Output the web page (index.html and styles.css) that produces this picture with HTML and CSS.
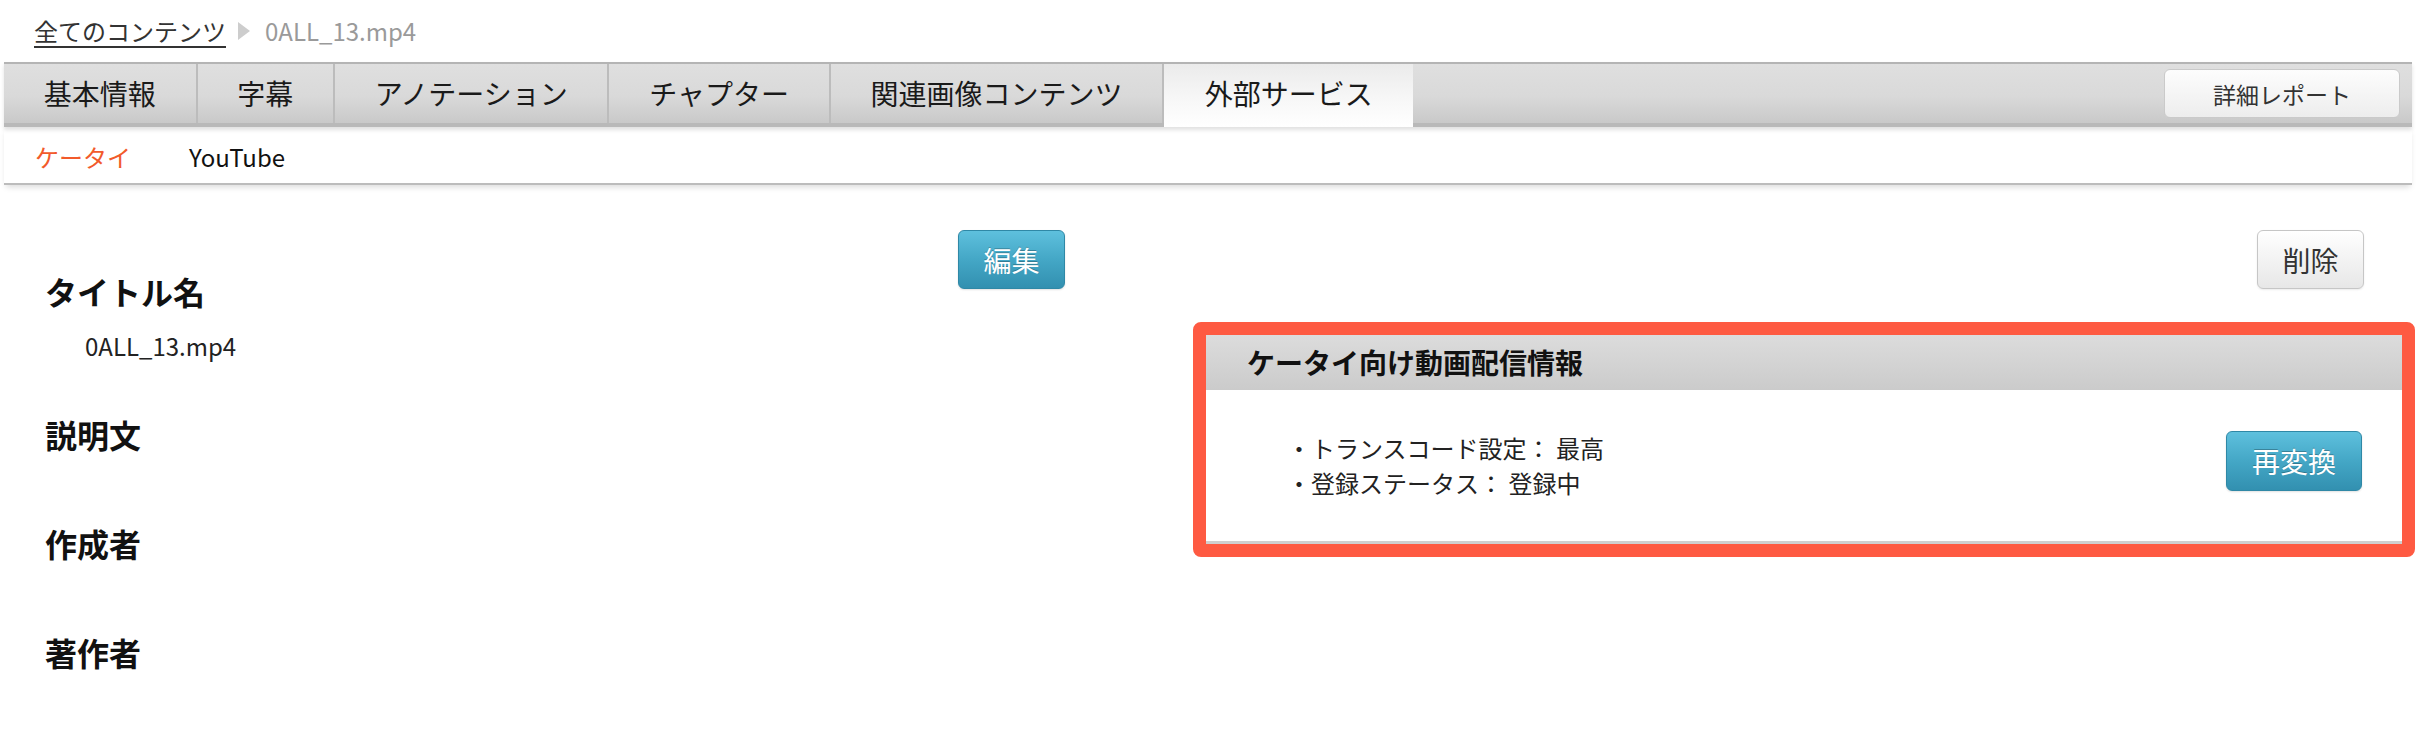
FILE: index.html
```html
<!DOCTYPE html>
<html lang="ja">
<head>
  <meta charset="UTF-8" />
  <meta name="viewport" content="width=device-width, initial-scale=1.0"/>
  <title>0ALL_13.mp4 - 外部サービス</title>
  <link rel="stylesheet" href="styles.css">
</head>

<body>
  <div class="page">
    <!-- パンくず -->
    <div class="breadcrumb">
      <a href="#">全てのコンテンツ</a>
      <span class="crumb-arrow"></span>
      <span class="crumb-current">0ALL_13.mp4</span>
    </div>

    <!-- タブ -->
    <div class="tabbar">
      <ul class="tabs">
        <li>基本情報</li>
        <li>字幕</li>
        <li>アノテーション</li>
        <li>チャプター</li>
        <li>関連画像コンテンツ</li>
        <li class="active">外部サービス</li>
      </ul>
      <button class="btn-report">詳細レポート</button>
    </div>

    <div class="subnav">
      <a href="#" class="active">ケータイ</a>
      <a href="#">YouTube</a>
    </div>

    <!-- 内容 -->
    <div class="detail">
      <div class="meta">
        <dl>
          <dt>タイトル名</dt>
          <dd>0ALL_13.mp4</dd>
          <dt>説明文</dt>
          <dd></dd>
          <dt>作成者</dt>
          <dd></dd>
          <dt>著作者</dt>
          <dd></dd>
        </dl>
        <button class="btn btn-blue btn-edit">編集</button>
      </div>

      <div class="side">
        <div class="side-head">
          <button class="btn btn-gray btn-delete">削除</button>
        </div>
        <div class="panel">
          <div class="panel-head">ケータイ向け動画配信情報</div>
          <div class="panel-body">
            <ul class="info-list">
              <li>・トランスコード設定： 最高</li>
              <li>・登録ステータス： 登録中</li>
            </ul>
            <button class="btn btn-blue btn-convert">再変換</button>
          </div>
        </div>
      </div>
    </div>
  </div>
</body>
</html>
```

FILE: styles.css
```css
body {
  margin: 0;
  font-family: "Noto Sans CJK JP", "Noto Sans", sans-serif;
  color: #222;
  background: #fff;
}

.page {
  margin: 0 12px 0 4px;
}

/* breadcrumb */
.breadcrumb {
  height: 62px;
  display: flex;
  align-items: center;
  padding-left: 30px;
  font-size: 24px;
  line-height: 30px;
}

.breadcrumb a {
  color: #333;
  text-decoration: underline;
  text-underline-offset: 5px;
  text-decoration-thickness: 2px;
}

.crumb-arrow {
  width: 0;
  height: 0;
  margin: 0 15px 0 12px;
  border-left: 12px solid #cdcdcd;
  border-top: 9px solid transparent;
  border-bottom: 9px solid transparent;
}

.crumb-current {
  color: #9a9a9a;
}

/* tabs */
.tabbar {
  display: flex;
  justify-content: space-between;
  height: 59px;
  border-top: 2px solid #b4b4b4;
  border-bottom: 4px solid #b9b9b9;
  background: linear-gradient(#dfdfdf, #d9d9d9 55%, #c9c9c9);
  box-shadow: 0 3px 4px rgba(0, 0, 0, 0.12);
}

.tabs {
  display: flex;
  list-style: none;
  margin: 0;
  padding: 0;
}

.tabs li {
  padding: 0 39.75px;
  border-right: 2px solid #bcbcbc;
  font-size: 28px;
  line-height: 59px;
  color: #1a1a1a;
}

.tabs li.active {
  padding: 0 40.5px 4px;
  margin-bottom: -4px;
  border-right: none;
  background: linear-gradient(#ebebeb, #f8f8f8 60%, #fff);
}

.btn-report {
  align-self: center;
  width: 236px;
  height: 49px;
  margin-right: 12px;
  font-family: inherit;
  font-size: 23px;
  color: #333;
  background: linear-gradient(#fdfdfd, #ededed);
  border: 1px solid #cacaca;
  border-radius: 6px;
  cursor: pointer;
}

.subnav {
  display: flex;
  align-items: center;
  gap: 58px;
  height: 53px;
  padding: 3px 0 0 31px;
  border-bottom: 2px solid #bcbcbc;
  box-shadow: 0 4px 6px -2px rgba(0, 0, 0, 0.15);
  font-size: 24px;
}

.subnav a {
  color: #111;
  text-decoration: none;
}

.subnav a.active {
  color: #f25a2b;
}

/* content */
.detail {
  display: grid;
  grid-template-columns: 1020px 1222px;
  column-gap: 128px;
  padding: 45px 0 0 41px;
}

.meta {
  display: flex;
  justify-content: space-between;
  align-items: flex-start;
}

.meta dl {
  margin: 37px 0 0;
}

.meta dt {
  font-size: 32px;
  font-weight: bold;
  line-height: 48px;
  color: #111;
}

.meta dd {
  margin: 0 0 47px;
  padding: 14px 0 0 40px;
  font-size: 24px;
  line-height: 34px;
}

.btn {
  font-family: inherit;
  font-size: 28px;
  border-radius: 6px;
  cursor: pointer;
}

.btn-blue {
  color: #fff;
  background: linear-gradient(#5ec0dd, #44a7c6 50%, #3290b0);
  border: 1px solid #2f88a6;
  text-shadow: 0 -1px 0 rgba(0, 0, 0, 0.25);
  box-shadow: 0 1px 2px rgba(0, 0, 0, 0.12);
}

.btn-gray {
  color: #333;
  background: linear-gradient(#fff, #e7e7e7);
  border: 1px solid #c6c6c6;
  box-shadow: 0 1px 2px rgba(0, 0, 0, 0.08);
}

.btn-edit,
.btn-delete {
  width: 107px;
  height: 59px;
}

.side-head {
  display: flex;
  justify-content: flex-end;
  padding-right: 51px;
}

.panel {
  margin-top: 33px;
  border: 13px solid #fe5a42;
  border-radius: 8px;
}

.panel-head {
  height: 55px;
  padding-left: 41px;
  background: linear-gradient(#dcdcdc, #cbcbcb);
  font-size: 28px;
  font-weight: bold;
  line-height: 55px;
  color: #111;
}

.panel-body {
  display: flex;
  align-items: center;
  justify-content: space-between;
  height: 151px;
  padding: 0 40px 0 81px;
  border-bottom: 3px solid #cfcfcf;
}

.info-list {
  list-style: none;
  margin: -2px 0 0;
  padding: 0;
  font-size: 24px;
  line-height: 35px;
}

.btn-convert {
  width: 136px;
  height: 60px;
  margin-top: -10px;
}
```
